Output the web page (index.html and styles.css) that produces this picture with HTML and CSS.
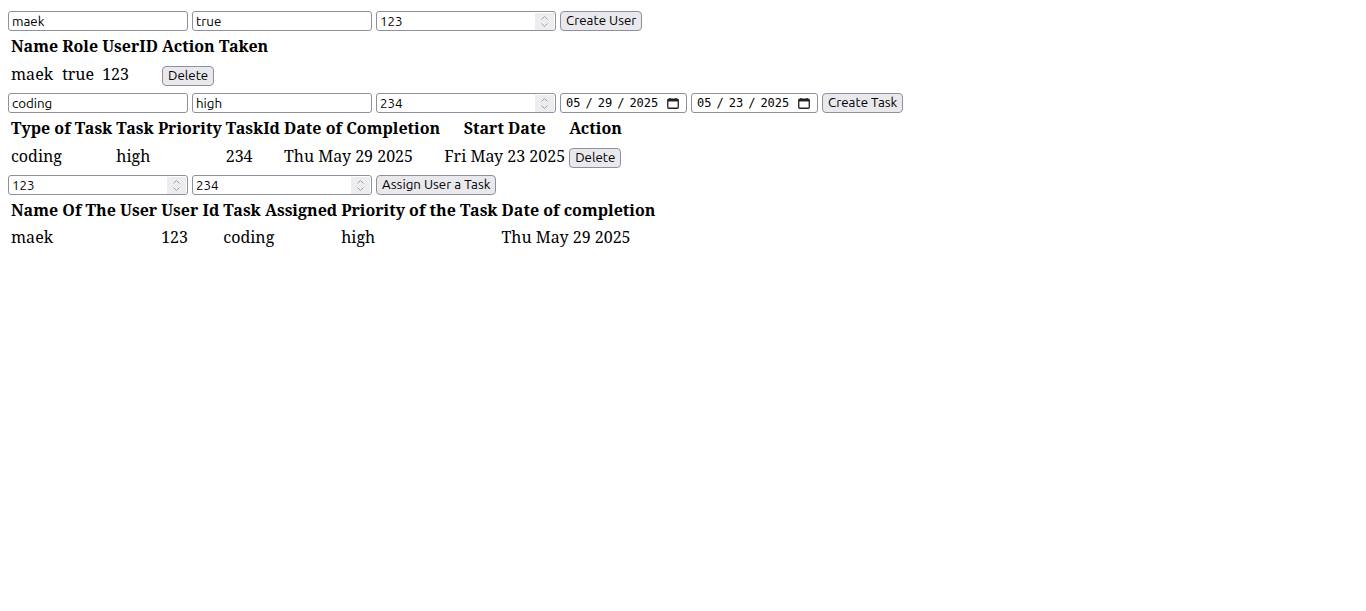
FILE: index.html
```html
<!DOCTYPE html>
<html>
<head>
<meta charset="utf-8">
<link rel="stylesheet" href="styles.css">
</head>
<body>
<div class="form">
  <input class="field" type="text" value="maek">
  <input class="field" type="text" value="true">
  <span class="field numbox"><input class="num" type="number" value="123"><svg class="spin" width="19" height="17" viewBox="0 0 19 17"><rect width="19" height="17" fill="#ededf0"/><path d="M6.5 6.5 9.5 3.5 12.5 6.5M6.5 10.5 9.5 13.5 12.5 10.5" fill="none" stroke="#a0a0a8" stroke-width="1"/></svg></span>
  <button class="btn">Create User</button>
</div>
<table>
  <tr><th>Name</th><th>Role</th><th>UserID</th><th>Action Taken</th></tr>
  <tr class="btn-row"><td>maek</td><td>true</td><td>123</td><td><button class="btn">Delete</button></td></tr>
</table>
<div class="form">
  <input class="field" type="text" value="coding">
  <input class="field" type="text" value="high">
  <span class="field numbox"><input class="num" type="number" value="234"><svg class="spin" width="19" height="17" viewBox="0 0 19 17"><rect width="19" height="17" fill="#ededf0"/><path d="M6.5 6.5 9.5 3.5 12.5 6.5M6.5 10.5 9.5 13.5 12.5 10.5" fill="none" stroke="#a0a0a8" stroke-width="1"/></svg></span>
  <span class="datebox"><input class="date" type="date" value="2025-05-29"><svg class="cal" width="12" height="11" viewBox="0 0 12 11"><rect x="0.75" y="1.25" width="10.5" height="9" rx="1" fill="none" stroke="#222" stroke-width="1.3"/><rect x="0.75" y="1.25" width="10.5" height="2.2" fill="#222"/><path d="M3 0v2M9 0v2" stroke="#222" stroke-width="1.3"/></svg></span>
  <span class="datebox"><input class="date" type="date" value="2025-05-23"><svg class="cal" width="12" height="11" viewBox="0 0 12 11"><rect x="0.75" y="1.25" width="10.5" height="9" rx="1" fill="none" stroke="#222" stroke-width="1.3"/><rect x="0.75" y="1.25" width="10.5" height="2.2" fill="#222"/><path d="M3 0v2M9 0v2" stroke="#222" stroke-width="1.3"/></svg></span>
  <button class="btn">Create Task</button>
</div>
<table>
  <tr><th>Type of Task</th><th>Task Priority</th><th>TaskId</th><th>Date of Completion</th><th>Start Date</th><th>Action</th></tr>
  <tr class="btn-row"><td>coding</td><td>high</td><td>234</td><td>Thu May 29 2025</td><td>Fri May 23 2025</td><td><button class="btn">Delete</button></td></tr>
</table>
<div class="form">
  <span class="field numbox"><input class="num" type="number" value="123"><svg class="spin" width="19" height="17" viewBox="0 0 19 17"><rect width="19" height="17" fill="#ededf0"/><path d="M6.5 6.5 9.5 3.5 12.5 6.5M6.5 10.5 9.5 13.5 12.5 10.5" fill="none" stroke="#a0a0a8" stroke-width="1"/></svg></span>
  <span class="field numbox"><input class="num" type="number" value="234"><svg class="spin" width="19" height="17" viewBox="0 0 19 17"><rect width="19" height="17" fill="#ededf0"/><path d="M6.5 6.5 9.5 3.5 12.5 6.5M6.5 10.5 9.5 13.5 12.5 10.5" fill="none" stroke="#a0a0a8" stroke-width="1"/></svg></span>
  <button class="btn">Assign User a Task</button>
</div>
<table>
  <tr><th>Name Of The User</th><th>User Id</th><th>Task Assigned</th><th>Priority of the Task</th><th>Date of completion</th></tr>
  <tr><td>maek</td><td>123</td><td>coding</td><td>high</td><td>Thu May 29 2025</td></tr>
</table>
</body>
</html>
```
FILE: styles.css
```css
body {
  margin: 8px;
  font-family: "Noto Serif", "DejaVu Serif", serif;
  font-size: 16px;
  color: #000;
  background: #fff;
}

.form {
  display: flex;
  align-items: flex-start;
  gap: 4px;
  height: 24px;
  padding-top: 3px;
  box-sizing: border-box;
}

.field {
  box-sizing: border-box;
  width: 180px;
  height: 20px;
  margin: 0;
  padding: 0 3px;
  border: 1px solid #8f8f9d;
  border-radius: 3px;
  background: #fff;
  font-family: "Ubuntu", "Noto Sans", sans-serif;
  font-size: 13.333px;
  color: #000;
}

.numbox {
  display: flex;
  align-items: center;
  padding: 0 1px 0 3px;
}

.num {
  flex: 1;
  min-width: 0;
  height: 100%;
  margin: 0;
  padding: 0;
  border: 0;
  outline: none;
  background: transparent;
  font-family: "Ubuntu", "Noto Sans", sans-serif;
  font-size: 13.333px;
  color: #000;
  -moz-appearance: textfield;
}

.num::-webkit-inner-spin-button,
.num::-webkit-outer-spin-button {
  -webkit-appearance: none;
  margin: 0;
}

.spin {
  display: block;
  flex: none;
}

.datebox {
  box-sizing: border-box;
  display: flex;
  align-items: center;
  width: 127px;
  height: 20px;
  padding: 0 7px 0 5px;
  border: 1px solid #8f8f9d;
  border-radius: 3px;
  background: #fff;
}

.date {
  flex: 1;
  min-width: 0;
  margin: 0;
  padding: 0;
  border: 0;
  outline: none;
  background: transparent;
  font-family: "DejaVu Sans Mono", monospace;
  font-size: 12px;
  color: #000;
}

.date::-webkit-calendar-picker-indicator {
  display: none;
}

.date::-webkit-datetime-edit-fields-wrapper {
  padding: 0;
}

.date::-webkit-datetime-edit-text {
  padding: 0 5px;
}

.date::-webkit-datetime-edit-month-field,
.date::-webkit-datetime-edit-day-field,
.date::-webkit-datetime-edit-year-field {
  padding: 0;
}

.cal {
  display: block;
  flex: none;
}

.btn {
  box-sizing: border-box;
  height: 20px;
  margin: 0;
  padding: 0 5px;
  border: 1px solid #8f8f9d;
  border-radius: 4px;
  background: #e9e9ed;
  font-family: "Ubuntu", "Noto Sans", sans-serif;
  font-size: 13.333px;
  color: #000;
  line-height: 18px;
}

table {
  border-spacing: 2px;
}

th, td {
  padding: 1px;
  line-height: 23px;
}

.btn-row td {
  line-height: 25px;
}

td .btn {
  vertical-align: middle;
}
```
